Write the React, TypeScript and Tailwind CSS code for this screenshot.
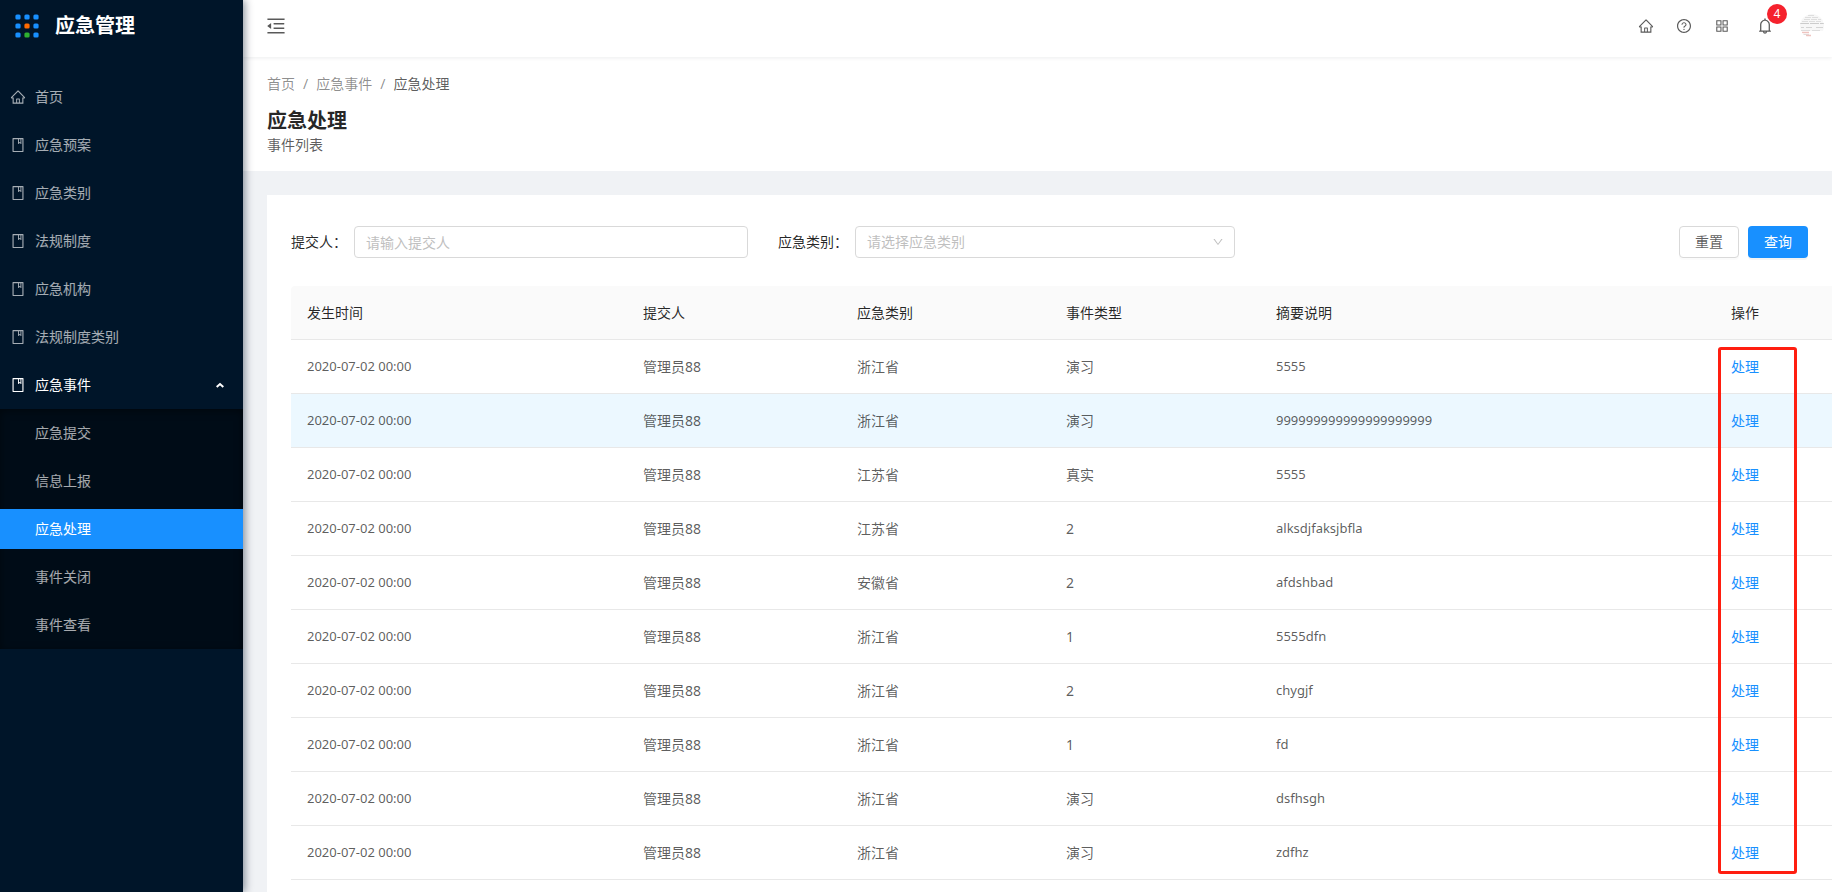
import React, { useState } from 'react';
import {
    AiOutlineAppstore,
    AiOutlineBell,
    AiOutlineBook,
    AiOutlineDown,
    AiOutlineHome,
    AiOutlineMenuFold,
    AiOutlineQuestionCircle,
} from 'react-icons/ai';

interface EmergencyEvent {
    id: number;
    time: string;
    submitter: string;
    category: string;
    type: string;
    summary: string;
}

const makeEvent = (id: number, category: string, type: string, summary: string): EmergencyEvent => ({
    id,
    time: '2020-07-02 00:00',
    submitter: '管理员88',
    category,
    type,
    summary,
});

// Mock data - replace with actual API call
const mockEvents: EmergencyEvent[] = [
    makeEvent(1, '浙江省', '演习', '5555'),
    makeEvent(2, '浙江省', '演习', '999999999999999999999'),
    makeEvent(3, '江苏省', '真实', '5555'),
    makeEvent(4, '江苏省', '2', 'alksdjfaksjbfla'),
    makeEvent(5, '安徽省', '2', 'afdshbad'),
    makeEvent(6, '浙江省', '1', '5555dfn'),
    makeEvent(7, '浙江省', '2', 'chygjf'),
    makeEvent(8, '浙江省', '1', 'fd'),
    makeEvent(9, '浙江省', '演习', 'dsfhsgh'),
    makeEvent(10, '浙江省', '演习', 'zdfhz'),
];

const menuItems = ['应急预案', '应急类别', '法规制度', '应急机构', '法规制度类别'];
const subMenuItems = ['应急提交', '信息上报', '应急处理', '事件关闭', '事件查看'];
const categories = ['浙江省', '江苏省', '安徽省'];

const Logo: React.FC = () => (
    <svg width="24" height="24" viewBox="0 0 24 24" aria-hidden="true">
        {[0, 1, 2].map(row =>
            [0, 1, 2].map(col => {
                let fill = '#1890ff';
                if (col === 1 && row === 1) fill = '#ff6a00';
                if (col === 1 && row === 2) fill = '#2eb030';
                return (
                    <rect
                        key={`${row}-${col}`}
                        x={col * 9 + 0.4}
                        y={row * 9 + 0.4}
                        width="5.2"
                        height="5.2"
                        rx="1.5"
                        fill={fill}
                    />
                );
            })
        )}
    </svg>
);

const Avatar: React.FC = () => (
    <svg width="24" height="24" viewBox="0 0 24 24" aria-hidden="true">
        <clipPath id="avatar-clip">
            <circle cx="12" cy="12" r="12" />
        </clipPath>
        <g clipPath="url(#avatar-clip)">
            <rect width="24" height="17" fill="#f7f7f7" />
            <path d="M8 1.500h7M5 3.500h14M4 5.500h17M2 7.500h19" stroke="#dedede" strokeDasharray="6 1" />
            <path d="M0 9.500h24" stroke="#cccccc" strokeDasharray="9 1" />
            <path d="M1 13.500h3M6 13.500h6M16 13.500h7" stroke="#d4d4d4" />
            <path d="M1 16.500h9M12 16.500h8M3 20.500h6" stroke="#dedede" />
            <path d="M2 18.500h7M6 21.500h5" stroke="#efc4c0" strokeWidth="1.500" />
        </g>
    </svg>
);

const Sidebar: React.FC = () => {
    const [active, setActive] = useState('应急处理');
    const [open, setOpen] = useState(true);

    return (
        <aside className="relative z-10 w-[243px] shrink-0 bg-[#001529] text-white/65 shadow-[2px_0_8px_rgba(0,21,41,0.45)]">
            <div className="flex h-[52px] items-center gap-4 pl-[15px] text-white">
                <Logo />
                <h1 className="text-xl font-bold">应急管理</h1>
            </div>
            <nav className="pt-[21px]">
                <a href="#" className="my-1 flex h-10 items-center gap-[9px] pl-[10px]">
                    <AiOutlineHome size={16} />
                    首页
                </a>
                {menuItems.map(item => (
                    <a key={item} href="#" className="mt-2 mb-1 flex h-10 items-center gap-[9px] pl-[10px]">
                        <AiOutlineBook size={16} />
                        {item}
                    </a>
                ))}
                <button
                    type="button"
                    onClick={() => setOpen(!open)}
                    className="mt-2 mb-1 flex h-10 w-full items-center gap-[9px] pr-[18px] pl-[10px] text-white"
                >
                    <AiOutlineBook size={16} />
                    <span className="flex-1 text-left">应急事件</span>
                    <svg width="10" height="6" viewBox="0 0 10 6" fill="none" aria-hidden="true">
                        <path d="M1.700 5 5 2 8.300 5" stroke="currentColor" strokeWidth="2" />
                    </svg>
                </button>
                {open && (
                    <div className="flex flex-col gap-2 bg-[#000c17] py-1 shadow-[inset_0_2px_8px_rgba(0,0,0,0.45)]">
                        {subMenuItems.map(item => (
                            <a
                                key={item}
                                href="#"
                                onClick={() => setActive(item)}
                                className={
                                    item === active
                                        ? 'flex h-10 items-center bg-[#1890ff] pl-[35px] text-white'
                                        : 'flex h-10 items-center pl-[35px]'
                                }
                            >
                                {item}
                            </a>
                        ))}
                    </div>
                )}
            </nav>
        </aside>
    );
};

const TopBar: React.FC = () => (
    <header className="relative flex h-[57px] items-center justify-between bg-white pr-2 pb-[5px] pl-[22px] shadow-[0_1px_4px_rgba(0,21,41,0.08)]">
        <button type="button" aria-label="收起菜单">
            <AiOutlineMenuFold size={22} />
        </button>
        <div className="flex items-center gap-[22px]">
            <button type="button" aria-label="首页">
                <AiOutlineHome size={16} />
            </button>
            <button type="button" aria-label="帮助">
                <AiOutlineQuestionCircle size={16} />
            </button>
            <button type="button" aria-label="应用">
                <AiOutlineAppstore size={16} />
            </button>
            <button type="button" aria-label="通知" className="relative mx-1">
                <AiOutlineBell size={18} />
                <span className="absolute -top-[13px] left-[11px] flex h-5 w-5 items-center justify-center rounded-full bg-[#f5222d] text-xs text-white">
                    4
                </span>
            </button>
            <button type="button" aria-label="用户">
                <Avatar />
            </button>
        </div>
    </header>
);

const SearchForm: React.FC = () => {
    const [submitter, setSubmitter] = useState('');
    const [category, setCategory] = useState('');

    const handleReset = () => {
        setSubmitter('');
        setCategory('');
    };

    return (
        <form
            className="grid grid-cols-[457fr_457fr_543fr] gap-[30px] pr-6"
            onSubmit={e => e.preventDefault()}
        >
            <div className="flex items-center">
                <label htmlFor="submitter" className="w-[63px] shrink-0 text-black/85">
                    提交人：
                </label>
                <input
                    id="submitter"
                    value={submitter}
                    onChange={e => setSubmitter(e.target.value)}
                    placeholder="请输入提交人"
                    className="h-8 w-full min-w-0 rounded border border-[#d9d9d9] px-[11px] outline-none placeholder:text-[#bfbfbf]"
                />
            </div>
            <div className="flex items-center">
                <label htmlFor="category" className="w-[77px] shrink-0 text-black/85">
                    应急类别：
                </label>
                <div className="relative flex-1">
                    <select
                        id="category"
                        value={category}
                        onChange={e => setCategory(e.target.value)}
                        className="h-8 w-full appearance-none rounded border border-[#d9d9d9] bg-white px-[11px] text-[#bfbfbf] outline-none"
                    >
                        <option value="">请选择应急类别</option>
                        {categories.map(c => (
                            <option key={c}>{c}</option>
                        ))}
                    </select>
                    <AiOutlineDown size={12} className="pointer-events-none absolute top-[10px] right-[11px] text-[#bfbfbf]" />
                </div>
            </div>
            <div className="flex justify-end gap-[9px]">
                <button
                    type="button"
                    onClick={handleReset}
                    className="h-8 w-[60px] rounded border border-[#d9d9d9] bg-white shadow-[0_2px_0_rgba(0,0,0,0.015)]"
                >
                    重置
                </button>
                <button
                    type="submit"
                    className="h-8 w-[60px] rounded bg-[#1890ff] text-white shadow-[0_2px_0_rgba(0,0,0,0.045)]"
                >
                    查询
                </button>
            </div>
        </form>
    );
};

const EventTable: React.FC<{ events: EmergencyEvent[] }> = ({ events }) => (
    <div className="relative mt-7">
        <table className="w-full table-fixed border-separate border-spacing-0 text-left">
            <colgroup>
                <col className="w-[336px]" />
                <col className="w-[214px]" />
                <col className="w-[209px]" />
                <col className="w-[210px]" />
                <col className="w-[455px]" />
                <col className="w-[117px]" />
            </colgroup>
            <thead>
                <tr className="h-[54px] bg-[#fafafa] text-black/85">
                    {['发生时间', '提交人', '应急类别', '事件类型', '摘要说明', '操作'].map(title => (
                        <th key={title} className="border-b border-[#e8e8e8] px-4 font-normal first:rounded-tl">
                            {title}
                        </th>
                    ))}
                </tr>
            </thead>
            <tbody>
                {events.map(event => (
                    <tr
                        key={event.id}
                        className={
                            event.id === 2
                                ? 'h-[54px] bg-[#ecf8ff] *:border-b *:border-[#e8e8e8] *:px-4'
                                : 'h-[54px] *:border-b *:border-[#e8e8e8] *:px-4'
                        }
                    >
                        <td className="text-[13px]">{event.time}</td>
                        <td>{event.submitter}</td>
                        <td>{event.category}</td>
                        <td>{event.type}</td>
                        <td className="text-[13px]">{event.summary}</td>
                        <td>
                            <a href="#" className="text-[#1890ff]">
                                处理
                            </a>
                        </td>
                    </tr>
                ))}
            </tbody>
        </table>
        {/* Highlight around the action column */}
        <div className="pointer-events-none absolute top-[61px] right-[35px] bottom-[6px] w-[79px] rounded-[3px] border-3 border-[#ff1e10]" />
    </div>
);

const App: React.FC = () => {
    return (
        <div className="flex min-h-screen bg-[#f0f2f5] font-['Noto_Sans','Noto_Sans_CJK_SC',sans-serif] text-sm text-black/65">
            <Sidebar />
            <div className="flex min-w-0 flex-1 flex-col">
                <TopBar />
                <section className="h-[114px] bg-white px-6 pt-[17px]">
                    <nav className="flex gap-2 text-black/45">
                        <a href="#">首页</a>
                        <span>/</span>
                        <a href="#">应急事件</a>
                        <span>/</span>
                        <span className="text-black/65">应急处理</span>
                    </nav>
                    <h2 className="mt-[13px] text-xl font-bold text-black/85">应急处理</h2>
                    <p>事件列表</p>
                </section>
                <main className="mt-6 ml-6 flex-1 bg-white pt-[31px] pl-6">
                    <SearchForm />
                    <EventTable events={mockEvents} />
                </main>
            </div>
        </div>
    );
};

export default App;
